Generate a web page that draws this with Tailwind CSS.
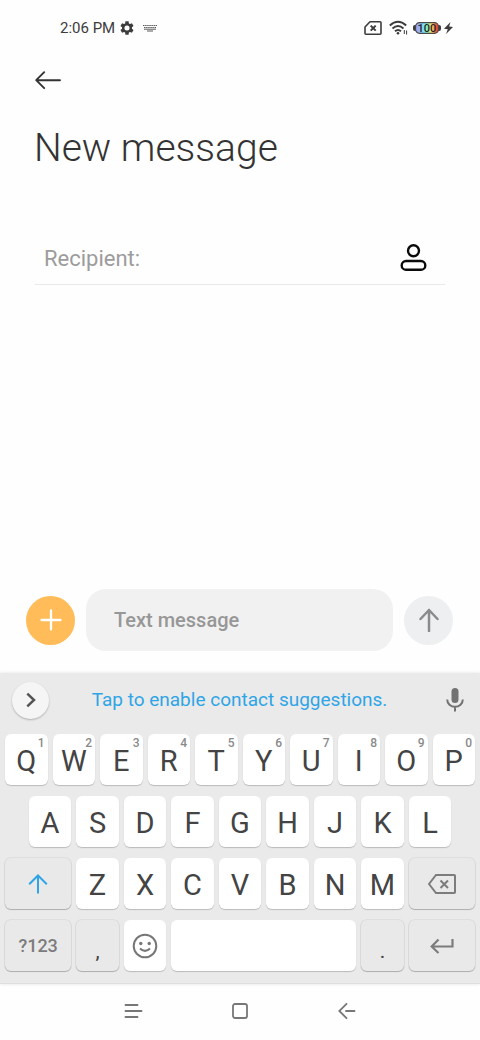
<!DOCTYPE html>
<html lang="en">
<head>
<meta charset="utf-8">
<meta name="viewport" content="width=device-width, initial-scale=1">
<title>New message</title>
<script src="https://cdn.jsdelivr.net/npm/@tailwindcss/browser@4"></script>
</head>
<body class="flex min-h-screen flex-col bg-[#fefefe] font-['Roboto',sans-serif] text-[#3c3c3c]">

<!-- Status bar -->
<div class="flex h-14 items-center justify-between pr-[27px] pl-[60px]">
  <div class="flex items-center">
    <span class="text-[15px]">2:06 PM</span>
    <svg class="ml-1 size-4" viewBox="0 0 24 24" fill="#3c3c3c" aria-hidden="true"><path d="M19.400 13a7.500 7.500 0 0 0 0-2l2.400-1.900-2.400-4.200-2.900 1.200a7.500 7.500 0 0 0-1.700-1L14.400 2H9.600l-.4 3.100a7.500 7.500 0 0 0-1.700 1L4.600 4.900 2.200 9.100 4.600 11a7.500 7.500 0 0 0 0 2l-2.400 1.900 2.400 4.200 2.900-1.200a7.500 7.500 0 0 0 1.700 1l.4 3.100h4.800l.4-3.100a7.500 7.500 0 0 0 1.700-1l2.900 1.200 2.400-4.200zM12 15.800a3.800 3.800 0 1 1 0-7.600 3.800 3.800 0 0 1 0 7.600z"/></svg>
    <svg class="ml-2 h-2 w-[14px]" viewBox="0 0 14 8" fill="none" stroke="#5a5a5a" aria-hidden="true"><path d="M0 1.500h14" stroke-dasharray="1.500 .6"/><path d="M1 3.500h12" stroke-dasharray="1.500 .6"/><path d="M1 5.200h12M4 7h6"/></svg>
  </div>
  <div class="flex items-center">
    <svg class="h-4 w-[18px]" viewBox="0 0 18 16" fill="none" stroke="#3c3c3c" stroke-width="1.600" stroke-linejoin="round" aria-hidden="true"><path d="M6 1.800h10q1 0 1 1v10.400q0 1-1 1H2q-1 0-1-1V7z"/><path d="M6.700 5.600l5 5M11.700 5.600l-5 5" stroke-width="2"/></svg>
    <svg class="ml-[7px] h-4 w-5" viewBox="0 0 20 16" fill="none" stroke="#3c3c3c" stroke-width="1.900" aria-hidden="true"><path d="M.8 5.500Q9 -2 17.200 5.500M3.500 8.500Q9 3.500 14.500 8.500M6 11.300Q9 8.600 12 11.300"/><circle cx="9" cy="13.200" r="1.300" fill="#3c3c3c" stroke="none"/><path d="M15.300 10v4M17.600 10.500v4" stroke-width="1"/></svg>
    <svg class="ml-1 h-4 w-7" viewBox="0 0 28 16" role="img" aria-label="Battery 100">
      <defs><linearGradient id="charge"><stop offset="0" stop-color="#a99af0"/><stop offset=".25" stop-color="#8fc4fa"/><stop offset=".4" stop-color="#74eeee"/><stop offset=".55" stop-color="#9af0a4"/><stop offset=".7" stop-color="#ffdf75"/><stop offset=".85" stop-color="#f86a48"/><stop offset="1" stop-color="#ee3a35"/></linearGradient></defs>
      <rect x="0" y="5" width="28" height="6" rx="2" fill="#3c3c3c"/>
      <rect x="2.500" y="2.700" width="23" height="10.600" rx="4" fill="url(#charge)" stroke="#4a4a4a" stroke-width="1.200"/>
      <text x="14" y="12" text-anchor="middle" font-size="11" font-weight="500" font-family="Roboto, sans-serif" fill="#222">100</text>
    </svg>
    <svg class="ml-[3px] h-3 w-[9px]" viewBox="0 0 9 12" fill="#3c3c3c" aria-hidden="true"><path d="M6.500 0L0 6.800l3.800.4L2 12l7-7-3.900-.4z"/></svg>
  </div>
</div>

<main class="flex flex-1 flex-col">
  <header class="flex flex-col items-start px-[34px]">
    <button class="flex h-12 items-center" aria-label="Back">
      <svg class="h-5 w-7" viewBox="0 0 28 20" fill="none" stroke="#333" stroke-width="1.900" stroke-linecap="round" stroke-linejoin="round"><path d="M26 10.200H2.500M10.200 2.200L2.200 10.200L10.200 18.200"/></svg>
    </button>
    <h1 class="mt-5 text-[39px] leading-[48px] font-light text-[#333]">New message</h1>
  </header>

  <div class="mx-[35px] mt-[60px] flex h-[53px] items-center border-b border-[#e9e9e9] pr-[18px] pl-[9px]">
    <input type="text" aria-label="Recipient" placeholder="Recipient:" class="min-w-0 flex-1 bg-transparent text-[22px] outline-none placeholder:text-[#9c9c9c]">
    <button aria-label="Choose contact">
      <svg class="size-7" viewBox="0 0 28 28" fill="none" stroke="#0a0a0a" stroke-width="2.400"><circle cx="14.500" cy="6.700" r="5.500"/><rect x="2.700" y="17" width="23.600" height="8.800" rx="4.400"/></svg>
    </button>
  </div>

  <form class="mt-auto mb-[22px] flex items-center gap-[11px] pr-[27px] pl-[26px]">
    <button type="button" aria-label="Add attachment" class="flex size-[49px] shrink-0 items-center justify-center rounded-full bg-[#ffbc58]">
      <svg class="size-6" viewBox="0 0 24 24" fill="none" stroke="#fff" stroke-width="2.300" stroke-linecap="round"><path d="M12 2.500v19M2.500 12h19"/></svg>
    </button>
    <input type="text" aria-label="Text message" placeholder="Text message" class="h-[62px] min-w-0 flex-1 rounded-[20px] bg-[#f1f1f1] px-7 text-xl font-medium outline-none placeholder:text-[#979797]">
    <button type="button" aria-label="Send" class="flex size-[49px] shrink-0 items-center justify-center rounded-full bg-[#eeeff1]">
      <svg class="size-6" viewBox="0 0 24 24" fill="none" stroke="#8a8b8d" stroke-width="2.500" stroke-linecap="round" stroke-linejoin="round"><path d="M12 23V2M3.500 11L12 2l8.500 9"/></svg>
    </button>
  </form>
</main>

<!-- Keyboard -->
<section aria-label="Keyboard" class="border-b border-[#dedede] bg-[#eaeaea] pb-3 shadow-[0_0_3px_rgba(0,0,0,0.12)]">
  <div class="flex h-[54px] items-center justify-between pr-4 pl-3">
    <button aria-label="More tools" class="flex size-[37px] items-center justify-center rounded-full bg-[#f5f5f5] shadow-[0_1px_2px_rgba(0,0,0,0.25)]">
      <svg class="h-4 w-3" viewBox="0 0 12 16" fill="none" stroke="#555" stroke-width="2.500"><path d="M2.300 1.700L9 8l-6.700 6.300"/></svg>
    </button>
    <button class="mr-4 text-[19px] text-[#2fa5e6]">Tap to enable contact suggestions.</button>
    <button aria-label="Voice input">
      <svg class="h-6 w-[18px]" viewBox="0 0 18 24" fill="none" stroke="#727272" stroke-width="2"><rect x="5.500" y="0" width="7" height="15" rx="3.500" fill="#727272" stroke="none"/><path d="M1.200 11.500a7.800 7.300 0 0 0 15.600 0M9 19v4.500"/></svg>
    </button>
  </div>
  <div id="keys" class="grid grid-cols-[repeat(20,minmax(0,1fr))] gap-x-[5px] gap-y-[11px] px-[5px] pt-[7px]"></div>
</section>

<nav aria-label="System" class="flex h-14 items-center justify-center gap-[87px] pb-[2px] text-[#777]">
  <button aria-label="Recent apps"><svg class="size-5" viewBox="0 0 20 20" fill="none" stroke="currentColor" stroke-width="1.800" stroke-linecap="round"><path d="M2.500 4h12M2.500 10h16M2.500 16h12"/></svg></button>
  <button aria-label="Home"><svg class="size-5" viewBox="0 0 20 20" fill="none" stroke="currentColor" stroke-width="1.800"><rect x="3" y="3" width="14" height="14" rx="2"/></svg></button>
  <button aria-label="Back"><svg class="size-5" viewBox="0 0 20 20" fill="none" stroke="currentColor" stroke-width="1.800" stroke-linecap="round"><path d="M9.500 2.800L2.300 10l7.200 7.200M9 10h8.500"/></svg></button>
</nav>

<script>
const letter = 'relative col-span-2 flex h-[51px] items-center justify-center rounded-md bg-white pt-[3px] text-[29px] leading-none text-[#444] shadow-[0_1px_1px_rgba(0,0,0,0.2)]';
const dim = 'flex h-[51px] items-center justify-center rounded-md bg-[#e9e9e9] shadow-[0_0_0_1px_rgba(0,0,0,0.05),0_1px_1px_rgba(0,0,0,0.22)]';
const digits = '1234567890';
const key = (c, extra = '', hint = '') => `<button class="${letter} ${extra}">${c}${hint ? `<span class="absolute top-[3px] right-[3px] text-[12px] leading-none font-medium text-[#8a8a8a]">${hint}</span>` : ''}</button>`;
const icon = (cls, box, body) => `<svg class="${cls}" viewBox="${box}" fill="none" stroke="currentColor" stroke-width="2">${body}</svg>`;

document.getElementById('keys').innerHTML =
  [...'QWERTYUIOP'].map((c, i) => key(c, '', digits[i])).join('') +
  [...'ASDFGHJKL'].map((c, i) => key(c, i ? '' : 'col-start-2')).join('') +
  `<button aria-label="Shift" class="${dim} col-span-3 col-start-1 text-[#2fa5e6]">${icon('size-5', '0 0 20 20', '<path d="M10 19.500V1.500M1.200 10.200L10 1.500l8.800 8.700"/>')}</button>` +
  [...'ZXCVBNM'].map(c => key(c)).join('') +
  `<button aria-label="Backspace" class="${dim} col-span-3 text-[#7c7c7c]">${icon('h-5 w-7', '0 0 28 20', '<path d="M8 1h18.200q.8 0 .8.800v16.400q0 .8-.8.800H8L1 10zM12.500 6.500l7.500 7.500M20 6.500l-7.500 7.500"/>')}</button>` +
  `<button class="${dim} col-span-3 text-lg font-medium text-[#7c7c7c]">?123</button>` +
  `<button class="${dim} col-span-2 pt-3 text-[21px] text-[#444]">,</button>` +
  `<button aria-label="Emoji" class="${letter} text-[#777]">${icon('mb-[3px] size-[26px]', '0 0 26 26', '<circle cx="13" cy="13" r="11.300"/><path d="M8 15.500q5 4.800 10 0"/><circle cx="8.800" cy="10.500" r="1.700" fill="currentColor" stroke="none"/><circle cx="17.200" cy="10.500" r="1.700" fill="currentColor" stroke="none"/>')}</button>` +
  `<button aria-label="Space" class="col-span-8 h-[51px] rounded-md bg-white shadow-[0_1px_1px_rgba(0,0,0,0.2)]"></button>` +
  `<button class="${dim} col-span-2 pt-3 text-[21px] text-[#444]">.</button>` +
  `<button aria-label="Enter" class="${dim} col-span-3 text-[#7c7c7c]">${icon('h-4 w-6', '0 0 24 16', '<path d="M22.500 1v7.500H2M8.500 1.500L1.700 8.500l6.800 6.500" stroke-width="2.200"/>')}</button>`;
</script>
</body>
</html>
